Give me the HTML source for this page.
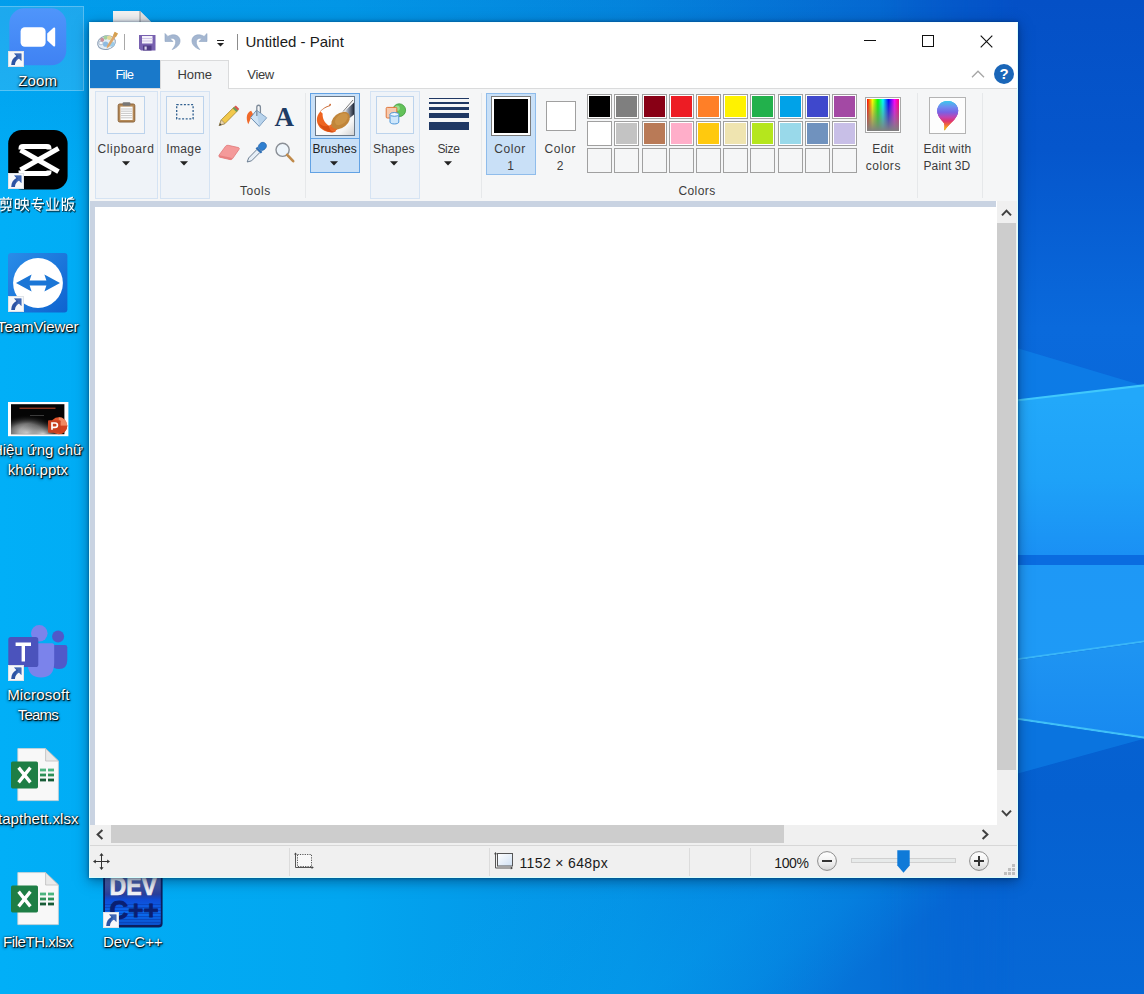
<!DOCTYPE html>
<html><head><meta charset="utf-8"><title>Untitled - Paint</title><style>
html,body{margin:0;padding:0;background:#0078d7;}
body{width:1144px;height:994px;overflow:hidden;position:relative;font-family:"Liberation Sans",sans-serif;}
.a{position:absolute;box-sizing:border-box}
.t{position:absolute;white-space:nowrap;line-height:20px;}
.d{position:absolute;white-space:nowrap;line-height:20px;color:#fff;text-shadow:1px 1px 1px rgba(0,0,0,.95),0 1px 3px rgba(0,0,0,.8),0 0 2px rgba(0,0,0,.6);}
svg{position:absolute;overflow:visible}
</style></head><body>
<svg class="a" style="left:0;top:0" width="1144" height="994" viewBox="0 0 1144 994">
<defs>
<linearGradient id="wg" x1="0" y1="0" x2="1144" y2="0" gradientUnits="userSpaceOnUse">
<stop offset="0" stop-color="#01aff7"/><stop offset="0.3" stop-color="#02a6f0"/><stop offset="0.55" stop-color="#0590e4"/><stop offset="0.75" stop-color="#0672d8"/><stop offset="0.9" stop-color="#0660d0"/><stop offset="1" stop-color="#0658cc"/>
</linearGradient>
<linearGradient id="wt" x1="0" y1="0" x2="0" y2="994" gradientUnits="userSpaceOnUse">
<stop offset="0" stop-color="#0040b0" stop-opacity="0.16"/><stop offset="0.2" stop-color="#0040b0" stop-opacity="0"/><stop offset="1" stop-color="#0040b0" stop-opacity="0"/>
</linearGradient>
<linearGradient id="rv" x1="0" y1="0" x2="0" y2="994" gradientUnits="userSpaceOnUse">
<stop offset="0" stop-color="#0450c6"/><stop offset="0.15" stop-color="#0556cc"/><stop offset="0.33" stop-color="#0a6adc"/><stop offset="0.8" stop-color="#0560d0"/><stop offset="1" stop-color="#0668d6"/>
</linearGradient>
<linearGradient id="rh" x1="880" y1="0" x2="1020" y2="0" gradientUnits="userSpaceOnUse">
<stop offset="0" stop-color="#fff" stop-opacity="0"/><stop offset="1" stop-color="#fff" stop-opacity="1"/>
</linearGradient>
<mask id="rm"><rect x="880" y="0" width="264" height="994" fill="url(#rh)"/></mask>
<linearGradient id="p1" x1="0" y1="400" x2="0" y2="556" gradientUnits="userSpaceOnUse">
<stop offset="0" stop-color="#22a8fa"/><stop offset="0.5" stop-color="#1ea2f8"/><stop offset="1" stop-color="#1a90f4"/>
</linearGradient>
<linearGradient id="p2" x1="0" y1="565" x2="0" y2="660" gradientUnits="userSpaceOnUse">
<stop offset="0" stop-color="#1e98f6"/><stop offset="1" stop-color="#1e9af6"/>
</linearGradient>
<linearGradient id="p3" x1="0" y1="650" x2="0" y2="735" gradientUnits="userSpaceOnUse">
<stop offset="0" stop-color="#1e94f2"/><stop offset="1" stop-color="#188af0"/>
</linearGradient>
<linearGradient id="bd" x1="500" y1="883" x2="692" y2="1114" gradientUnits="userSpaceOnUse">
<stop offset="0" stop-color="#00a8f4" stop-opacity="0"/><stop offset="0.6" stop-color="#00a8f4" stop-opacity=".3"/><stop offset="0.79" stop-color="#00a8f4" stop-opacity=".22"/><stop offset="1" stop-color="#00a8f4" stop-opacity="0"/>
</linearGradient>
</defs>
<rect width="1144" height="994" fill="url(#wg)"/>
<rect width="1144" height="994" fill="url(#wt)"/>
<rect x="880" width="264" height="994" fill="url(#rv)" mask="url(#rm)"/>
<rect x="0" y="860" width="1144" height="134" fill="url(#bd)"/>
<!-- right side light panes -->
<polygon points="900,313 1144,386 900,414" fill="#0e80e8" opacity="0.8"/>
<polygon points="900,414 1144,385 1144,556 900,556" fill="url(#p1)"/>
<polygon points="900,413.2 1144,384.2 1144,386.4 900,415.4" fill="#40c8fc"/>
<rect x="900" y="555" width="244" height="10" fill="#0a6ce0"/>
<polygon points="900,565 1144,565 1144,642 900,676" fill="url(#p2)"/>
<polygon points="900,675 1144,640.5 1144,642.5 900,677" fill="#3ab6f8"/>
<polygon points="900,677 1144,642.5 1144,737 900,701" fill="url(#p3)"/>
<polygon points="900,700.5 1144,736.5 1144,738.7 900,702.7" fill="#40c0f8"/>
<polygon points="900,702.7 1144,738.7 900,806" fill="#0c78e2" opacity="0.85"/>
</svg>
<svg style="left:112px;top:10px" width="40" height="13" viewBox="0 0 40 13"><path d="M1 13 V1 H28 L39 12 V13 Z" fill="#f2f2f2"/><path d="M28 1 V12 H39 Z" fill="#e2e2e2"/><path d="M28 1 V12" stroke="#7a7a7a" stroke-width="0.8"/></svg>
<div class="a" style="left:0px;top:6px;width:84px;height:85px;background:rgba(255,255,255,.115);border:1px solid rgba(255,255,255,.26);border-left:none"></div>
<svg style="left:9px;top:8px" width="58" height="58" viewBox="0 0 58 58"><defs><linearGradient id="zg" x1="0" y1="0" x2="0" y2="1"><stop offset="0" stop-color="#4f95fb"/><stop offset="1" stop-color="#3f82f3"/></linearGradient></defs>
<rect x="0.3" y="0.3" width="57" height="57" rx="15" fill="url(#zg)"/>
<rect x="11.6" y="19.2" width="25" height="19.6" rx="4.2" fill="#fff"/>
<path d="M38.2 25.4 L44.4 19.8 Q46.2 18.6 46.2 20.8 V37.2 Q46.2 39.4 44.4 38.2 L38.2 32.6 Z" fill="#fff"/></svg>
<svg style="left:8px;top:51px" width="16" height="16" viewBox="0 0 16 16"><rect width="16" height="16" fill="#f7f8fa"/><rect x="0.5" y="0.5" width="15" height="15" fill="none" stroke="#dfe3e8" stroke-width="1"/>
<path d="M13.4 2.6 V10 L11 7.6 C8.6 8.8 7.2 10.8 6.9 14 H3.2 C3.4 9.4 5.4 6.6 8.4 5.1 L6 2.6 Z" fill="#2d54a4"/>
<path d="M13.4 2.6 V10 L11 7.6 C9.6 8.3 8.6 9.2 7.9 10.4 C8 8 9 6.2 10.2 5.6 L8.6 4 L6 2.6 Z" fill="#5078c2" opacity=".55"/></svg>
<span class="d" style="left:18.20px;top:70.80px;font-size:15px;letter-spacing:0.189px;color:#fff;">Zoom</span>
<svg style="left:8px;top:130px" width="60" height="60" viewBox="0 0 60 60"><rect x="0.2" y="0" width="59.4" height="59.4" rx="13.5" fill="#000"/>
<g fill="none" stroke="#fff" stroke-width="5" stroke-linejoin="miter">
<path d="M41 19.5 V18.5 Q41 16.6 39 16.6 H15 Q13 16.6 13 18.5 V19.5"/>
<path d="M41 40.5 V41.5 Q41 43.4 39 43.4 H15 Q13 43.4 13 41.5 V40.5"/>
<path d="M12.5 20 L50.5 41.6"/><path d="M12.5 40 L50.5 18.4"/>
</g></svg>
<svg style="left:8px;top:173px" width="16" height="16" viewBox="0 0 16 16"><rect width="16" height="16" fill="#f7f8fa"/><rect x="0.5" y="0.5" width="15" height="15" fill="none" stroke="#dfe3e8" stroke-width="1"/>
<path d="M13.4 2.6 V10 L11 7.6 C8.6 8.8 7.2 10.8 6.9 14 H3.2 C3.4 9.4 5.4 6.6 8.4 5.1 L6 2.6 Z" fill="#2d54a4"/>
<path d="M13.4 2.6 V10 L11 7.6 C9.6 8.3 8.6 9.2 7.9 10.4 C8 8 9 6.2 10.2 5.6 L8.6 4 L6 2.6 Z" fill="#5078c2" opacity=".55"/></svg>
<svg style="left:-1.5px;top:196px" width="78" height="17" viewBox="0 0 78 17"><g fill="none" stroke="#000" stroke-opacity=".55" stroke-width="2.6" transform="translate(1 1)">
<path id="cjk" d="M1 3.2 H13 M4.4 1.2 L5.6 3 M9.8 1.2 L8.6 3 M2.2 5 V9.4 M2.2 5 H6 V9.2 M2.2 7 H6 M8.4 4.8 V8.6 M11.6 4.6 V9.6 L10.6 9.4 M1.2 11.2 H12.6 M6.6 11.2 Q6.2 14.4 1.4 15 M9.2 11.2 V14.6 L11.8 14.4
M16.4 3.4 V12.4 M16.4 3.4 H20.2 V12.4 H16.4 M16.4 7.8 H20.2 M22.2 4.4 H29 V9 H22.2 Z M25.6 1.6 V9.4 M21.2 9.2 H30 M25.6 9.2 Q24.8 13.6 21.4 15 M25.8 9.4 Q26.8 13.4 30 15
M34 3.6 H43 M32.2 7.6 H45 M38.6 1.2 L35.6 10.6 H42.6 M42.6 10.6 L39.2 14 M36.4 12 L41.6 15.2
M51.2 1.6 V13.6 M55.8 1.6 V13.6 M47.6 4.6 L49.6 10.8 M59.4 4.6 L57.4 10.8 M46.8 14 H60.2
M63.4 1.6 V15 M63.4 6 H66.6 M66.4 1.8 V6 M63.4 9.4 H66.2 V15 M68.6 3 H75.4 M68.6 3 V8.6 Q68.4 12.8 67.2 15 M68.8 7 H74.4 Q73.8 12 69.6 15 M70.4 8.6 Q72 12.8 75.6 15 M74 1.2 L69 2.8"/></g>
<use href="#cjk" fill="none" stroke="#fff" stroke-width="1.25"/></svg>
<svg style="left:8px;top:253px" width="60" height="60" viewBox="0 0 60 60"><defs><linearGradient id="tvg" x1="0" y1="0" x2="1" y2="1"><stop offset="0" stop-color="#2a8ce8"/><stop offset="1" stop-color="#0e63cf"/></linearGradient></defs>
<rect x="0" y="0" width="59.4" height="59.4" rx="3" fill="url(#tvg)"/>
<circle cx="30" cy="30" r="24.9" fill="#fff"/>
<path d="M8 30 L23.6 21.6 L21.6 27.4 H38.4 L36.4 21.6 L52 30 L36.4 38.4 L38.4 32.6 H21.6 L23.6 38.4 Z" fill="#1b76d6"/></svg>
<svg style="left:8px;top:296px" width="16" height="16" viewBox="0 0 16 16"><rect width="16" height="16" fill="#f7f8fa"/><rect x="0.5" y="0.5" width="15" height="15" fill="none" stroke="#dfe3e8" stroke-width="1"/>
<path d="M13.4 2.6 V10 L11 7.6 C8.6 8.8 7.2 10.8 6.9 14 H3.2 C3.4 9.4 5.4 6.6 8.4 5.1 L6 2.6 Z" fill="#2d54a4"/>
<path d="M13.4 2.6 V10 L11 7.6 C9.6 8.3 8.6 9.2 7.9 10.4 C8 8 9 6.2 10.2 5.6 L8.6 4 L6 2.6 Z" fill="#5078c2" opacity=".55"/></svg>
<span class="d" style="left:-3.00px;top:316.70px;font-size:15px;letter-spacing:-0.076px;color:#fff;">TeamViewer</span>
<svg style="left:8px;top:402px" width="61" height="35" viewBox="0 0 61 35"><defs><radialGradient id="smk" cx="0.3" cy="0.95" r="0.6"><stop offset="0" stop-color="#fff" stop-opacity=".95"/><stop offset="0.5" stop-color="#bbb" stop-opacity=".6"/><stop offset="1" stop-color="#000" stop-opacity="0"/></radialGradient>
<radialGradient id="smk2" cx="0.6" cy="1" r="0.45"><stop offset="0" stop-color="#eee" stop-opacity=".8"/><stop offset="1" stop-color="#000" stop-opacity="0"/></radialGradient></defs>
<rect width="60.4" height="34.2" fill="#fdfdfd"/>
<rect x="3" y="2.2" width="53.4" height="30" fill="#050505"/>
<rect x="3" y="2.2" width="53.4" height="30" fill="url(#smk)"/><rect x="3" y="2.2" width="53.4" height="30" fill="url(#smk2)"/>
<rect x="11.5" y="5.6" width="36" height="1.3" fill="#b4452c" opacity=".85"/>
<rect x="22" y="13" width="14" height="0.8" fill="#666" opacity=".7"/></svg>
<svg style="left:47px;top:416px" width="22" height="20" viewBox="0 0 22 20"><circle cx="11.8" cy="9.8" r="8.5" fill="#e2552d"/><path d="M11.8 1.3 A8.5 8.5 0 0 1 20.3 9.8 H11.8 Z" fill="#f08a62"/><path d="M11.8 9.8 H20.3 A8.5 8.5 0 0 1 11.8 18.3 Z" fill="#d2431f"/>
<rect x="1" y="4.2" width="12.6" height="12.6" rx="1" fill="#c9401f"/>
<path d="M5 13.8 V7 H8 Q10.4 7 10.4 9.2 Q10.4 11.4 8 11.4 H5" fill="none" stroke="#fff" stroke-width="1.7"/></svg>
<span class="d" style="left:-8.00px;top:439.60px;font-size:15px;letter-spacing:-0.066px;color:#fff;">Hiệu ứng chữ</span>
<span class="d" style="left:7.80px;top:459.70px;font-size:15px;letter-spacing:0.018px;color:#fff;">khói.pptx</span>
<svg style="left:8px;top:622px" width="62" height="60" viewBox="0 0 62 60"><circle cx="50.1" cy="14.6" r="6" fill="#5059c9"/>
<path d="M42.3 23 H57 Q59.3 23 59.3 25.3 V38 Q59.3 47 51 47 Q45 47 42.3 42 Z" fill="#5059c9"/>
<circle cx="31.3" cy="11.3" r="8.3" fill="#7b83eb"/>
<path d="M19.7 21.2 H44 Q46.2 21.2 46.2 23.4 V41 Q46.2 55.5 33 55.5 Q19.7 55.5 19.7 41 Z" fill="#7b83eb"/>
<rect x="0.3" y="15.1" width="30" height="30" rx="2.6" fill="#4b53bc"/>
<path d="M7.6 22.2 H23 M15.3 22.2 V39.4" stroke="#fff" stroke-width="3.4" fill="none"/></svg>
<svg style="left:8px;top:665px" width="16" height="16" viewBox="0 0 16 16"><rect width="16" height="16" fill="#f7f8fa"/><rect x="0.5" y="0.5" width="15" height="15" fill="none" stroke="#dfe3e8" stroke-width="1"/>
<path d="M13.4 2.6 V10 L11 7.6 C8.6 8.8 7.2 10.8 6.9 14 H3.2 C3.4 9.4 5.4 6.6 8.4 5.1 L6 2.6 Z" fill="#2d54a4"/>
<path d="M13.4 2.6 V10 L11 7.6 C9.6 8.3 8.6 9.2 7.9 10.4 C8 8 9 6.2 10.2 5.6 L8.6 4 L6 2.6 Z" fill="#5078c2" opacity=".55"/></svg>
<span class="d" style="left:7.20px;top:685.40px;font-size:15px;letter-spacing:0.173px;color:#fff;">Microsoft</span>
<span class="d" style="left:17.70px;top:705.30px;font-size:15px;letter-spacing:-0.776px;color:#fff;">Teams</span>
<svg style="left:11px;top:748px" width="49" height="54" viewBox="0 0 49 54"><path d="M6.8 0.6 H34.6 L47.4 13 V52.6 H6.8 Z" fill="#f8f8f8" stroke="#d0d0d0" stroke-width="0.8"/>
<path d="M34.6 0.6 V13 H47.4 Z" fill="#e9e9e9" stroke="#bdbdbd" stroke-width="0.8"/>
<rect x="29" y="20.6" width="6" height="2.8" fill="#4cb480"/><rect x="37" y="20.6" width="6" height="2.8" fill="#4cb480"/>
<rect x="29" y="25.6" width="6" height="2.8" fill="#2e9058"/><rect x="37" y="25.6" width="6" height="2.8" fill="#2e9058"/>
<rect x="29" y="30.6" width="6" height="2.8" fill="#185c37"/><rect x="37" y="30.6" width="6" height="2.8" fill="#185c37"/>
<rect x="0" y="13.6" width="27" height="26.8" rx="1.6" fill="#1e7e45"/>
<path d="M7.6 19.6 L19.4 34.4 M19.4 19.6 L7.6 34.4" stroke="#fff" stroke-width="3.3" fill="none"/></svg>
<span class="d" style="left:-2.00px;top:808.70px;font-size:15px;letter-spacing:0.035px;color:#fff;">tapthett.xlsx</span>
<svg style="left:11px;top:871.5px" width="49" height="54" viewBox="0 0 49 54"><path d="M6.8 0.6 H34.6 L47.4 13 V52.6 H6.8 Z" fill="#f8f8f8" stroke="#d0d0d0" stroke-width="0.8"/>
<path d="M34.6 0.6 V13 H47.4 Z" fill="#e9e9e9" stroke="#bdbdbd" stroke-width="0.8"/>
<rect x="29" y="20.6" width="6" height="2.8" fill="#4cb480"/><rect x="37" y="20.6" width="6" height="2.8" fill="#4cb480"/>
<rect x="29" y="25.6" width="6" height="2.8" fill="#2e9058"/><rect x="37" y="25.6" width="6" height="2.8" fill="#2e9058"/>
<rect x="29" y="30.6" width="6" height="2.8" fill="#185c37"/><rect x="37" y="30.6" width="6" height="2.8" fill="#185c37"/>
<rect x="0" y="13.6" width="27" height="26.8" rx="1.6" fill="#1e7e45"/>
<path d="M7.6 19.6 L19.4 34.4 M19.4 19.6 L7.6 34.4" stroke="#fff" stroke-width="3.3" fill="none"/></svg>
<span class="d" style="left:3.00px;top:932.00px;font-size:15px;letter-spacing:-0.424px;color:#fff;">FileTH.xlsx</span>
<svg style="left:103px;top:868px" width="60" height="60" viewBox="0 0 60 60"><defs><linearGradient id="dv1" x1="0" y1="0" x2="0" y2="1"><stop offset="0" stop-color="#6d7fb8"/><stop offset="0.45" stop-color="#2a3f9a"/><stop offset="0.55" stop-color="#0f4cd6"/><stop offset="0.8" stop-color="#0a6af0"/><stop offset="1" stop-color="#0a50cc"/></linearGradient></defs>
<rect x="0.2" y="0" width="59.4" height="59.6" rx="4" fill="#0c1d5c"/>
<rect x="2" y="1" width="55.8" height="56" rx="2.5" fill="url(#dv1)"/>
<g stroke="#0a3aa8" stroke-opacity=".55" stroke-width="1"><path d="M2 36.5 H58 M2 39.5 H58 M2 42.5 H58 M2 45.5 H58 M2 48.5 H58 M2 51.5 H58 M2 54.5 H58"/></g>
<text x="6.6" y="26.8" style="font-family:'Liberation Sans',sans-serif;font-weight:700;font-size:25px" fill="#f2f2f6" stroke="#f2f2f6" stroke-width="0.7" textLength="47.4" lengthAdjust="spacingAndGlyphs">DEV</text>
<text x="6.6" y="51" style="font-family:'Liberation Sans',sans-serif;font-weight:700;font-size:26px" fill="#0a1f72" stroke="#0a1f72" stroke-width="0.8" textLength="49" lengthAdjust="spacingAndGlyphs">C++</text></svg>
<svg style="left:103px;top:911.5px" width="16" height="16" viewBox="0 0 16 16"><rect width="16" height="16" fill="#f7f8fa"/><rect x="0.5" y="0.5" width="15" height="15" fill="none" stroke="#dfe3e8" stroke-width="1"/>
<path d="M13.4 2.6 V10 L11 7.6 C8.6 8.8 7.2 10.8 6.9 14 H3.2 C3.4 9.4 5.4 6.6 8.4 5.1 L6 2.6 Z" fill="#2d54a4"/>
<path d="M13.4 2.6 V10 L11 7.6 C9.6 8.3 8.6 9.2 7.9 10.4 C8 8 9 6.2 10.2 5.6 L8.6 4 L6 2.6 Z" fill="#5078c2" opacity=".55"/></svg>
<span class="d" style="left:103.00px;top:932.00px;font-size:15px;letter-spacing:-0.075px;color:#fff;">Dev-C++</span>
<div class="a" style="left:89px;top:22px;width:929px;height:856px;background:#fff;border:1px solid #d8ffff;border-top-color:#f4ffff;box-shadow:0 3px 12px rgba(0,25,60,.5),0 0 3px rgba(0,35,80,.55)"></div>
<svg style="left:96px;top:31px" width="23" height="20" viewBox="0 0 23 20"><defs><filter id="pbl" x="-10%" y="-10%" width="120%" height="120%"><feGaussianBlur stdDeviation="0.55"/></filter></defs>
<g filter="url(#pbl)">
<ellipse cx="10.5" cy="11.6" rx="9" ry="6.8" transform="rotate(-14 10.5 11.6)" fill="#e4eef6" stroke="#8d9fb5" stroke-width="1"/>
<ellipse cx="5" cy="12" rx="2.2" ry="1.8" fill="#f8fbfd" stroke="#8d9fb5" stroke-width="0.6"/>
<circle cx="6.2" cy="8.8" r="2" fill="#c8909a"/><circle cx="9.6" cy="6.6" r="2.1" fill="#a6d09c"/><circle cx="13.4" cy="6.8" r="2.3" fill="#e6d998"/>
<circle cx="9.6" cy="13.2" r="2.6" fill="#8fbbe2"/><ellipse cx="15.6" cy="13" rx="3" ry="2.6" fill="#9ccbe8"/>
<path d="M19.2 1.2 L21.6 2.8 L13.4 15.6 L10.6 17.6 L11.2 14.4 Z" fill="#dca66a"/>
<path d="M18.6 0.8 L22 2.6 L19.8 6.2 L17 4.6 Z" fill="#d6a050"/>
</g>
</svg>
<div class="a" style="left:124px;top:34px;width:1px;height:16px;background:#a8a8a8"></div>
<svg style="left:139px;top:35px" width="17" height="16" viewBox="0 0 17 16">
<path d="M0 0 H16.5 V15.5 H2 L0 13.5 Z" fill="#7861b0"/>
<rect x="3" y="1" width="10.5" height="7.5" fill="#f4f1fa"/>
<rect x="3" y="3" width="10.5" height="1" fill="#cfc6e6"/><rect x="3" y="5.5" width="10.5" height="1" fill="#cfc6e6"/>
<rect x="4" y="10.5" width="8.5" height="5" fill="#4d3a82"/><rect x="5.5" y="11.5" width="2.2" height="3.2" fill="#d9d2ee"/>
</svg>
<svg style="left:164px;top:32px" width="18" height="19" viewBox="0 0 18 19">
<path d="M1 1.5 L1 9.5 L9 9.5 L6.3 6.8 C8.2 5.8 11 6.4 11.6 9.3 C12.1 12 10.6 14.6 8.2 17.6 C13.2 15.6 16.6 12.2 16 7.8 C15.2 3 9.2 1.2 3.9 4.4 Z" fill="#a4b6d0" stroke="#8fa4c3" stroke-width="0.6"/>
</svg>
<svg style="left:190px;top:32px" width="18" height="19" viewBox="0 0 18 19">
<g transform="translate(18 0) scale(-1 1)"><path d="M1 1.5 L1 9.5 L9 9.5 L6.3 6.8 C8.2 5.8 11 6.4 11.6 9.3 C12.1 12 10.6 14.6 8.2 17.6 C13.2 15.6 16.6 12.2 16 7.8 C15.2 3 9.2 1.2 3.9 4.4 Z" fill="#a4b6d0" stroke="#8fa4c3" stroke-width="0.6"/></g>
</svg>
<div class="a" style="left:217px;top:40px;width:7px;height:1px;background:#222"></div>
<svg style="left:217px;top:43px" width="7" height="4" viewBox="0 0 7 4"><path d="M0 0 H7 L3.5 3.6 Z" fill="#222"/></svg>
<div class="a" style="left:237px;top:34px;width:1px;height:16px;background:#8c8c8c"></div>
<span class="t" style="left:245.50px;top:31.70px;font-size:15px;letter-spacing:-0.005px;color:#1a1a1a;">Untitled - Paint</span>
<div class="a" style="left:864px;top:40px;width:12px;height:1px;background:#111"></div>
<div class="a" style="left:922px;top:35px;width:12px;height:12px;border:1px solid #111"></div>
<svg style="left:980px;top:35px" width="13" height="13" viewBox="0 0 13 13"><path d="M0.7 0.7 L12.3 12.3 M12.3 0.7 L0.7 12.3" stroke="#111" stroke-width="1.15" fill="none"/></svg>
<svg style="left:971px;top:69px" width="14" height="10" viewBox="0 0 14 10"><path d="M1 8.2 L7 2.2 L13 8.2" stroke="#a6a6a6" stroke-width="1.3" fill="none"/></svg>
<div class="a" style="left:994px;top:64px;width:20px;height:20px;border-radius:10px;background:#1a66b8"></div>
<span class="t" style="left:994px;top:64px;width:20px;text-align:center;font-size:15px;font-weight:bold;color:#fff;line-height:20px">?</span>
<div class="a" style="left:90px;top:88px;width:927px;height:1px;background:#dadbdc"></div>
<div class="a" style="left:90px;top:60px;width:70px;height:28px;background:#1979ca"></div>
<span class="t" style="left:115.40px;top:64.90px;font-size:13px;letter-spacing:-0.762px;color:#fff;">File</span>
<div class="a" style="left:160px;top:60px;width:69px;height:29px;background:#f5f6f7;border:1px solid #dadbdc;border-bottom:none"></div>
<span class="t" style="left:177.50px;top:64.90px;font-size:13px;letter-spacing:-0.094px;color:#3b3b3b;">Home</span>
<span class="t" style="left:247.30px;top:64.90px;font-size:13px;letter-spacing:-0.336px;color:#3b3b3b;">View</span>
<div class="a" style="left:90px;top:89px;width:927px;height:112px;background:#f5f6f7"></div>
<div class="a" style="left:95px;top:91px;width:63px;height:108px;border:1px solid #d5e3f3;background:#eff3f8"></div>
<div class="a" style="left:107px;top:96px;width:38px;height:38px;border:1px solid #bcd3ec;background:#f5f6f7"></div>
<svg style="left:116px;top:101px" width="22" height="23" viewBox="0 0 22 23">
<rect x="2.2" y="3" width="16.6" height="18" rx="1.5" fill="#b58a58" stroke="#8a6238" stroke-width="1"/>
<rect x="4.4" y="5.6" width="12.2" height="13.4" fill="#fdfdfd"/>
<path d="M5 8H16M5 10.2H16M5 12.4H16M5 14.6H16M5 16.8H16" stroke="#b9b9b9" stroke-width="0.8"/>
<rect x="6.6" y="1.2" width="7.8" height="3.6" rx="1" fill="#777"/>
</svg>
<span class="t" style="left:97.50px;top:138.84px;font-size:12px;letter-spacing:0.626px;color:#3b3b3b;">Clipboard</span>
<svg style="left:122px;top:161px" width="8" height="5" viewBox="0 0 8 5"><path d="M0 0.3 H8 L4 4.6 Z" fill="#222"/></svg>
<div class="a" style="left:160px;top:91px;width:50px;height:108px;border:1px solid #d5e3f3;background:#eff3f8"></div>
<div class="a" style="left:166px;top:96px;width:38px;height:38px;border:1px solid #bcd3ec;background:#f5f6f7"></div>
<svg style="left:176px;top:104px" width="18" height="16" viewBox="0 0 18 16"><rect x="0.7" y="0.7" width="16.4" height="14.2" fill="none" stroke="#2f5f8f" stroke-width="1.3" stroke-dasharray="2 1.6"/></svg>
<span class="t" style="left:166.20px;top:138.84px;font-size:12px;letter-spacing:0.390px;color:#3b3b3b;">Image</span>
<svg style="left:180px;top:161px" width="8" height="5" viewBox="0 0 8 5"><path d="M0 0.3 H8 L4 4.6 Z" fill="#222"/></svg>
<svg style="left:217px;top:104px" width="24" height="24" viewBox="0 0 24 24">
<path d="M2.2 21.6 L4.3 15.8 L17.2 3 L20.8 6.6 L8 19.5 Z" fill="#f2c94c" stroke="#a58428" stroke-width="0.8"/>
<path d="M2.2 21.6 L4.3 15.8 L8 19.5 Z" fill="#e8d5b0" stroke="#8b7a55" stroke-width="0.6"/>
<path d="M2.2 21.6 L3.1 19.2 L4.7 20.8 Z" fill="#444"/>
<path d="M17.2 3 L18.8 1.5 L22.3 5 L20.8 6.6 Z" fill="#d9534f"/>
<path d="M15.8 4.4 L17.2 3 L20.8 6.6 L19.4 8 Z" fill="#6a9a5a"/>
</svg>
<svg style="left:245px;top:104px" width="24" height="24" viewBox="0 0 24 24">
<path d="M6.2 6.8 C1.6 8.4 0.6 14 3.2 20.2 C5.2 16.2 5.8 12.6 8.2 10.4 Z" fill="#f0692a"/>
<path d="M11.5 6.2 L21.6 13.8 L14.2 22.4 L5.6 13.6 Z" fill="#cfe3f5" stroke="#6c8fb3" stroke-width="1"/>
<path d="M11.5 6.2 L21.6 13.8 L14.2 22.4 Z" fill="#a9c8e6" opacity="0.6"/>
<path d="M11.8 12 V3.2 C11.8 0.6 15.4 0.6 15.4 3.2 V9" fill="none" stroke="#7d8a99" stroke-width="1.3"/>
</svg>
<span class="t" style="left:274.6px;top:102.6px;font-family:'Liberation Serif',serif;font-weight:bold;font-size:27px;line-height:28px;color:#1f3c64">A</span>
<svg style="left:217px;top:142px" width="24" height="21" viewBox="0 0 24 21">
<path d="M2 13.2 L8.6 4.2 Q9.6 3 11.2 3.3 L21.6 5.6 Q22.8 6 22 7.4 L15.6 16.6 Q14.6 18 13 17.6 L2.8 15.2 Q1.4 14.6 2 13.2 Z" fill="#f49a9a" stroke="#e07878" stroke-width="0.8"/>
<path d="M2 13.2 L13.2 15.6 L15.6 16.6 Q14.6 18 13 17.6 L2.8 15.2 Q1.4 14.6 2 13.2 Z" fill="#e98080"/>
</svg>
<svg style="left:245px;top:141px" width="24" height="23" viewBox="0 0 24 23">
<path d="M2.2 21 L3.6 17 L12 8.4 L15 11.4 L6.6 19.8 Z" fill="#e6eef6" stroke="#6d7f92" stroke-width="1"/>
<path d="M10.6 7.4 L15.8 12.6 L17.4 11 L12.2 5.8 Z" fill="#2f6fb5"/>
<path d="M13.2 6.2 C13.6 2.4 17.6 -0.2 20.4 2.4 C23 5 20.4 9 16.6 9.6 Z" fill="#2f7fd0" stroke="#1f5fa6" stroke-width="0.7"/>
</svg>
<svg style="left:274px;top:141px" width="22" height="23" viewBox="0 0 22 23">
<circle cx="8.6" cy="8.8" r="6.6" fill="#eef5fb" stroke="#8a8f96" stroke-width="1.4"/>
<path d="M13.2 13.8 L19.2 20.2" stroke="#c08a4a" stroke-width="2.6" stroke-linecap="round"/>
</svg>
<span class="t" style="left:240.00px;top:181.24px;font-size:12px;letter-spacing:0.537px;color:#3b3b3b;">Tools</span>
<div class="a" style="left:305px;top:93px;width:1px;height:105px;background:#e6e8ea"></div>
<div class="a" style="left:310px;top:93px;width:50px;height:80px;background:#c9e0f7;border:1px solid #62a2e4"></div>
<div class="a" style="left:311px;top:138px;width:48px;height:1px;background:#62a2e4"></div>
<div class="a" style="left:315px;top:96px;width:40px;height:40px;background:#f7f7f7;border:1px solid #6a7888"></div>
<svg style="left:316px;top:97px" width="38" height="38" viewBox="0 0 38 38"><defs><linearGradient id="bg1" x1="0.3" y1="0.3" x2="1" y2="1"><stop offset="0" stop-color="#ffffff"/><stop offset="0.7" stop-color="#f6f6f6"/><stop offset="1" stop-color="#d2d2d2"/></linearGradient>
<linearGradient id="fer" x1="28" y1="0" x2="38" y2="0" gradientUnits="userSpaceOnUse"><stop offset="0" stop-color="#f0f2f5"/><stop offset="0.45" stop-color="#8a93a3"/><stop offset="1" stop-color="#1e2636"/></linearGradient></defs>
<rect width="38" height="38" fill="url(#bg1)"/>
<path d="M14.6 6.8 C15.4 7.6 15 8.8 13.6 9.2 C9 10.6 4.6 13.6 4 15.6 C3.2 14.8 7 10.4 13 8.4 C13.8 8 13.8 7.4 13 7 Z" fill="#c8622a"/>
<path d="M4.4 14.4 C-0.6 19.4 -0.6 27.4 6.4 32.6 C10.4 35.4 15.4 36 19.4 34.4 L12.8 28.8 C8.6 26 6.4 22 6.6 16.6 Z" fill="#ee6420"/>
<path d="M2 25 C4 31 10 35 16 35.4 C18 35.4 19.4 34.4 19.4 34.4 L12.8 28.8 C8 30.2 4 28 2 25 Z" fill="#d94f12"/>
<path d="M12.8 28.8 L17.6 26 L21 31.4 L19.4 34.4 C17.4 35.6 13.6 33.6 12.8 28.8 Z" fill="#f07030"/>
<path d="M27 14.6 L37 3" stroke="#5a5a5a" stroke-width="0.8" fill="none"/>
<path d="M27.6 15 L38 5.6 V17.6 L33.4 21.2 Z" fill="url(#fer)"/>
<ellipse cx="24.6" cy="23.6" rx="10.6" ry="7.2" transform="rotate(-40 24.6 23.6)" fill="#c0853a"/>
<ellipse cx="25.4" cy="22.2" rx="7.4" ry="4.6" transform="rotate(-40 25.4 22.2)" fill="#d09a4c" opacity=".75"/>
<path d="M15 29.6 C17.6 31.6 19.6 32.4 21.6 32 C19.8 34 16 34.2 13.6 31.2 Z" fill="#e66a26"/></svg>
<span class="t" style="left:312.40px;top:138.84px;font-size:12px;letter-spacing:0.040px;color:#222;">Brushes</span>
<svg style="left:330px;top:161px" width="8" height="5" viewBox="0 0 8 5"><path d="M0 0.3 H8 L4 4.6 Z" fill="#222"/></svg>
<div class="a" style="left:370px;top:91px;width:50px;height:108px;border:1px solid #d5e3f3;background:#eff3f8"></div>
<div class="a" style="left:376px;top:96px;width:38px;height:38px;border:1px solid #bcd3ec;background:#f5f6f7"></div>
<svg style="left:385px;top:102px" width="22" height="24" viewBox="0 0 22 24">
<circle cx="14.2" cy="8.2" r="6.4" fill="#63c25a" stroke="#3f9a3c" stroke-width="0.8"/>
<circle cx="12.2" cy="6.2" r="2.6" fill="#a6e39c" opacity="0.8"/>
<rect x="1.2" y="5.4" width="10.6" height="10.6" rx="1" fill="#f6c9ae" stroke="#e0763a" stroke-width="1"/>
<path d="M5 12.4 V20 C5 22.6 13.8 22.6 13.8 20 V12.4 Z" fill="#cfe7fb" stroke="#3f8fd6" stroke-width="0.9"/>
<ellipse cx="9.4" cy="12.4" rx="4.4" ry="1.9" fill="#eef7ff" stroke="#3f8fd6" stroke-width="0.9"/>
</svg>
<span class="t" style="left:373.00px;top:138.84px;font-size:12px;letter-spacing:0.167px;color:#3b3b3b;">Shapes</span>
<svg style="left:390px;top:161px" width="8" height="5" viewBox="0 0 8 5"><path d="M0 0.3 H8 L4 4.6 Z" fill="#222"/></svg>
<div class="a" style="left:429px;top:98px;width:40px;height:1px;background:#1f3864"></div>
<div class="a" style="left:429px;top:102px;width:40px;height:2px;background:#1f3864"></div>
<div class="a" style="left:429px;top:107px;width:40px;height:3px;background:#1f3864"></div>
<div class="a" style="left:429px;top:113px;width:40px;height:5px;background:#1f3864"></div>
<div class="a" style="left:429px;top:122px;width:40px;height:8px;background:#1f3864"></div>
<span class="t" style="left:437.40px;top:138.84px;font-size:12px;letter-spacing:-0.311px;color:#3b3b3b;">Size</span>
<svg style="left:444px;top:161px" width="8" height="5" viewBox="0 0 8 5"><path d="M0 0.3 H8 L4 4.6 Z" fill="#222"/></svg>
<div class="a" style="left:481px;top:93px;width:1px;height:105px;background:#e6e8ea"></div>
<div class="a" style="left:486px;top:93px;width:50px;height:82px;background:#c9e0f7;border:1px solid #8fbceb"></div>
<div class="a" style="left:491px;top:96px;width:40px;height:40px;background:#fff;border:1px solid #7a7a7a;"></div>
<div class="a" style="left:494px;top:99px;width:34px;height:34px;background:#000"></div>
<span class="t" style="left:494.30px;top:138.84px;font-size:12px;letter-spacing:0.585px;color:#3b3b3b;">Color</span>
<span class="t" style="left:507.30px;top:155.74px;font-size:12px;letter-spacing:-0.474px;color:#3b3b3b;">1</span>
<div class="a" style="left:546px;top:101px;width:30px;height:30px;background:#fff;border:1px solid #a0a0a0"></div>
<span class="t" style="left:544.60px;top:138.84px;font-size:12px;letter-spacing:0.585px;color:#3b3b3b;">Color</span>
<span class="t" style="left:556.80px;top:155.74px;font-size:12px;letter-spacing:-0.274px;color:#3b3b3b;">2</span>
<div class="a" style="left:587px;top:94px;width:25px;height:25px;border:1px solid #a0a0a0;background:#fff"></div>
<div class="a" style="left:589px;top:96px;width:21px;height:21px;background:#000000"></div>
<div class="a" style="left:587px;top:121px;width:25px;height:25px;border:1px solid #a0a0a0;background:#fff"></div>
<div class="a" style="left:589px;top:123px;width:21px;height:21px;background:#ffffff"></div>
<div class="a" style="left:587px;top:148px;width:25px;height:25px;border:1px solid #a0a0a0;background:#f5f6f7"></div>
<div class="a" style="left:614px;top:94px;width:25px;height:25px;border:1px solid #a0a0a0;background:#fff"></div>
<div class="a" style="left:616px;top:96px;width:21px;height:21px;background:#7f7f7f"></div>
<div class="a" style="left:614px;top:121px;width:25px;height:25px;border:1px solid #a0a0a0;background:#fff"></div>
<div class="a" style="left:616px;top:123px;width:21px;height:21px;background:#c3c3c3"></div>
<div class="a" style="left:614px;top:148px;width:25px;height:25px;border:1px solid #a0a0a0;background:#f5f6f7"></div>
<div class="a" style="left:642px;top:94px;width:25px;height:25px;border:1px solid #a0a0a0;background:#fff"></div>
<div class="a" style="left:644px;top:96px;width:21px;height:21px;background:#880015"></div>
<div class="a" style="left:642px;top:121px;width:25px;height:25px;border:1px solid #a0a0a0;background:#fff"></div>
<div class="a" style="left:644px;top:123px;width:21px;height:21px;background:#b97a57"></div>
<div class="a" style="left:642px;top:148px;width:25px;height:25px;border:1px solid #a0a0a0;background:#f5f6f7"></div>
<div class="a" style="left:669px;top:94px;width:25px;height:25px;border:1px solid #a0a0a0;background:#fff"></div>
<div class="a" style="left:671px;top:96px;width:21px;height:21px;background:#ed1c24"></div>
<div class="a" style="left:669px;top:121px;width:25px;height:25px;border:1px solid #a0a0a0;background:#fff"></div>
<div class="a" style="left:671px;top:123px;width:21px;height:21px;background:#ffaec9"></div>
<div class="a" style="left:669px;top:148px;width:25px;height:25px;border:1px solid #a0a0a0;background:#f5f6f7"></div>
<div class="a" style="left:696px;top:94px;width:25px;height:25px;border:1px solid #a0a0a0;background:#fff"></div>
<div class="a" style="left:698px;top:96px;width:21px;height:21px;background:#ff7f27"></div>
<div class="a" style="left:696px;top:121px;width:25px;height:25px;border:1px solid #a0a0a0;background:#fff"></div>
<div class="a" style="left:698px;top:123px;width:21px;height:21px;background:#ffc90e"></div>
<div class="a" style="left:696px;top:148px;width:25px;height:25px;border:1px solid #a0a0a0;background:#f5f6f7"></div>
<div class="a" style="left:723px;top:94px;width:25px;height:25px;border:1px solid #a0a0a0;background:#fff"></div>
<div class="a" style="left:725px;top:96px;width:21px;height:21px;background:#fff200"></div>
<div class="a" style="left:723px;top:121px;width:25px;height:25px;border:1px solid #a0a0a0;background:#fff"></div>
<div class="a" style="left:725px;top:123px;width:21px;height:21px;background:#efe4b0"></div>
<div class="a" style="left:723px;top:148px;width:25px;height:25px;border:1px solid #a0a0a0;background:#f5f6f7"></div>
<div class="a" style="left:750px;top:94px;width:25px;height:25px;border:1px solid #a0a0a0;background:#fff"></div>
<div class="a" style="left:752px;top:96px;width:21px;height:21px;background:#22b14c"></div>
<div class="a" style="left:750px;top:121px;width:25px;height:25px;border:1px solid #a0a0a0;background:#fff"></div>
<div class="a" style="left:752px;top:123px;width:21px;height:21px;background:#b5e61d"></div>
<div class="a" style="left:750px;top:148px;width:25px;height:25px;border:1px solid #a0a0a0;background:#f5f6f7"></div>
<div class="a" style="left:778px;top:94px;width:25px;height:25px;border:1px solid #a0a0a0;background:#fff"></div>
<div class="a" style="left:780px;top:96px;width:21px;height:21px;background:#00a2e8"></div>
<div class="a" style="left:778px;top:121px;width:25px;height:25px;border:1px solid #a0a0a0;background:#fff"></div>
<div class="a" style="left:780px;top:123px;width:21px;height:21px;background:#99d9ea"></div>
<div class="a" style="left:778px;top:148px;width:25px;height:25px;border:1px solid #a0a0a0;background:#f5f6f7"></div>
<div class="a" style="left:805px;top:94px;width:25px;height:25px;border:1px solid #a0a0a0;background:#fff"></div>
<div class="a" style="left:807px;top:96px;width:21px;height:21px;background:#3f48cc"></div>
<div class="a" style="left:805px;top:121px;width:25px;height:25px;border:1px solid #a0a0a0;background:#fff"></div>
<div class="a" style="left:807px;top:123px;width:21px;height:21px;background:#7092be"></div>
<div class="a" style="left:805px;top:148px;width:25px;height:25px;border:1px solid #a0a0a0;background:#f5f6f7"></div>
<div class="a" style="left:832px;top:94px;width:25px;height:25px;border:1px solid #a0a0a0;background:#fff"></div>
<div class="a" style="left:834px;top:96px;width:21px;height:21px;background:#a349a4"></div>
<div class="a" style="left:832px;top:121px;width:25px;height:25px;border:1px solid #a0a0a0;background:#fff"></div>
<div class="a" style="left:834px;top:123px;width:21px;height:21px;background:#c8bfe7"></div>
<div class="a" style="left:832px;top:148px;width:25px;height:25px;border:1px solid #a0a0a0;background:#f5f6f7"></div>
<span class="t" style="left:678.40px;top:180.84px;font-size:12px;letter-spacing:0.421px;color:#3b3b3b;">Colors</span>
<div class="a" style="left:865px;top:97px;width:36px;height:36px;background:#fff;border:1px solid #a9a9a9"></div>
<svg style="left:867px;top:99px" width="32" height="32" viewBox="0 0 32 32"><defs><linearGradient id="rb" x1="0" y1="0" x2="1" y2="0">
<stop offset="0" stop-color="#ff0000"/><stop offset="0.17" stop-color="#ffff00"/><stop offset="0.34" stop-color="#00ff00"/><stop offset="0.5" stop-color="#00ffff"/><stop offset="0.67" stop-color="#0000ff"/><stop offset="0.86" stop-color="#ff00ff"/><stop offset="1" stop-color="#ff0070"/></linearGradient>
<linearGradient id="rg" x1="0" y1="0" x2="0" y2="1"><stop offset="0" stop-color="#808080" stop-opacity="0"/><stop offset="1" stop-color="#808080" stop-opacity="1"/></linearGradient></defs>
<rect width="32" height="32" fill="url(#rb)"/><rect width="32" height="32" fill="url(#rg)"/></svg>
<span class="t" style="left:872.30px;top:138.84px;font-size:12px;letter-spacing:0.231px;color:#3b3b3b;">Edit</span>
<span class="t" style="left:865.80px;top:155.74px;font-size:12px;letter-spacing:0.515px;color:#3b3b3b;">colors</span>
<div class="a" style="left:917px;top:93px;width:1px;height:105px;background:#e6e8ea"></div>
<div class="a" style="left:929px;top:97px;width:37px;height:37px;background:#fdfdfd;border:1px solid #b4b4b4"></div>
<svg style="left:929px;top:97px" width="37" height="37" viewBox="0 0 37 37"><defs><linearGradient id="p3d" x1="0" y1="3.9" x2="0" y2="33.6" gradientUnits="userSpaceOnUse">
<stop offset="0" stop-color="#3bc8ec"/><stop offset="0.2" stop-color="#6f8df0"/><stop offset="0.38" stop-color="#7862e4"/><stop offset="0.55" stop-color="#c244b0"/><stop offset="0.68" stop-color="#e0356e"/><stop offset="0.8" stop-color="#ee6a3a"/><stop offset="0.92" stop-color="#f5b020"/><stop offset="1" stop-color="#c8a020"/></linearGradient>
<radialGradient id="p3c" cx="23.5" cy="6.5" r="9" gradientUnits="userSpaceOnUse"><stop offset="0" stop-color="#2fe0f0" stop-opacity=".95"/><stop offset="1" stop-color="#2fd0f0" stop-opacity="0"/></radialGradient>
<radialGradient id="p3l" cx="10" cy="13" r="6" gradientUnits="userSpaceOnUse"><stop offset="0" stop-color="#c89cf8" stop-opacity=".8"/><stop offset="1" stop-color="#c89cf8" stop-opacity="0"/></radialGradient></defs>
<path id="drop" d="M15.4 33.6 C15.2 31 16.2 28.5 15 26.2 C13.5 23.5 8.3 20 8.3 13.8 C8.3 8 12.8 3.9 18.6 3.9 C24.6 3.9 29.2 8.2 29.2 13.6 C29.2 20.5 22 25.8 18.6 29.6 C17.2 31.2 16.2 32.6 15.4 33.6 Z" fill="url(#p3d)"/>
<use href="#drop" fill="url(#p3c)"/><use href="#drop" fill="url(#p3l)"/></svg>
<span class="t" style="left:923.50px;top:138.84px;font-size:12px;letter-spacing:0.294px;color:#3b3b3b;">Edit with</span>
<span class="t" style="left:923.50px;top:155.74px;font-size:12px;letter-spacing:0.109px;color:#3b3b3b;">Paint 3D</span>
<div class="a" style="left:982px;top:93px;width:1px;height:105px;background:#e6e8ea"></div>
<div class="a" style="left:90px;top:201px;width:906px;height:624px;background:#c9d3e2"></div>
<div class="a" style="left:95px;top:207px;width:902px;height:618px;background:#fff"></div>
<div class="a" style="left:997px;top:201px;width:20px;height:624px;background:#f0f0f0"></div>
<div class="a" style="left:997px;top:223px;width:19px;height:547px;background:#cdcdcd"></div>
<svg style="left:1001px;top:208px" width="11" height="9" viewBox="0 0 11 9"><path d="M1 7.4 L5.5 2.6 L10 7.4" stroke="#404040" stroke-width="2" fill="none"/></svg>
<svg style="left:1001px;top:809px" width="11" height="9" viewBox="0 0 11 9"><path d="M1 1.6 L5.5 6.4 L10 1.6" stroke="#404040" stroke-width="2" fill="none"/></svg>
<div class="a" style="left:90px;top:825px;width:927px;height:20px;background:#f0f0f0"></div>
<div class="a" style="left:111px;top:825px;width:673px;height:18px;background:#cdcdcd"></div>
<svg style="left:95px;top:829px" width="9" height="11" viewBox="0 0 9 11"><path d="M7.4 1 L2.6 5.5 L7.4 10" stroke="#404040" stroke-width="2" fill="none"/></svg>
<svg style="left:981px;top:829px" width="9" height="11" viewBox="0 0 9 11"><path d="M1.6 1 L6.4 5.5 L1.6 10" stroke="#404040" stroke-width="2" fill="none"/></svg>
<div class="a" style="left:90px;top:845px;width:927px;height:32px;background:#f0f0f0;border-top:1px solid #d7d7d7"></div>
<div class="a" style="left:289px;top:848px;width:1px;height:28px;background:#dcdcdc"></div>
<div class="a" style="left:489px;top:848px;width:1px;height:28px;background:#dcdcdc"></div>
<div class="a" style="left:689px;top:848px;width:1px;height:28px;background:#dcdcdc"></div>
<div class="a" style="left:750px;top:848px;width:1px;height:28px;background:#dcdcdc"></div>
<svg style="left:93px;top:853px" width="17" height="17" viewBox="0 0 17 17"><path d="M8.5 1.5 V15.5 M1.5 8.5 H15.5" stroke="#333" stroke-width="1" fill="none"/>
<path d="M8.5 0 L10.6 2.8 H6.4 Z M8.5 17 L10.6 14.2 H6.4 Z M0 8.5 L2.8 6.4 V10.6 Z M17 8.5 L14.2 6.4 V10.6 Z" fill="#333"/></svg>
<svg style="left:294px;top:852px" width="20" height="18" viewBox="0 0 20 18"><rect x="3.5" y="2.5" width="14" height="12" fill="#f8f8f8" stroke="#555" stroke-width="1" stroke-dasharray="1.2 1.2"/>
<path d="M1.5 2 V15.5 H18.5" stroke="#555" stroke-width="1" fill="none"/>
<path d="M1.5 0.5 L3 2.6 H0 Z M19.8 15.5 L17.6 14 V17 Z" fill="#444"/></svg>
<svg style="left:494px;top:852px" width="20" height="18" viewBox="0 0 20 18"><defs><linearGradient id="isz" x1="0" y1="0" x2="1" y2="1"><stop offset="0" stop-color="#ffffff"/><stop offset="1" stop-color="#cfe0f3"/></linearGradient></defs>
<rect x="3.5" y="1.5" width="15" height="12.5" fill="url(#isz)" stroke="#555" stroke-width="1"/>
<path d="M1.5 1.5 V16 H17.5" stroke="#555" stroke-width="1" fill="none"/>
<path d="M1.5 0 L3 2.2 H0 Z M19 16 L16.8 14.5 V17.5 Z" fill="#444"/></svg>
<span class="t" style="left:519.50px;top:853.15px;font-size:14px;letter-spacing:0.358px;color:#1a1a1a;">1152 × 648px</span>
<span class="t" style="left:774.30px;top:852.75px;font-size:14px;letter-spacing:-0.402px;color:#1a1a1a;">100%</span>
<svg style="left:816px;top:850px" width="22" height="22" viewBox="0 0 22 22"><defs><linearGradient id="zb827" x1="0" y1="0" x2="0" y2="1"><stop offset="0" stop-color="#ffffff"/><stop offset="0.55" stop-color="#f1f1f1"/><stop offset="1" stop-color="#d6d6d6"/></linearGradient></defs>
<circle cx="11" cy="11" r="9.4" fill="url(#zb827)" stroke="#808080" stroke-width="0.9"/>
<path d="M6 11 H16 " stroke="#333" stroke-width="2" fill="none"/></svg>
<svg style="left:968px;top:850px" width="22" height="22" viewBox="0 0 22 22"><defs><linearGradient id="zb979" x1="0" y1="0" x2="0" y2="1"><stop offset="0" stop-color="#ffffff"/><stop offset="0.55" stop-color="#f1f1f1"/><stop offset="1" stop-color="#d6d6d6"/></linearGradient></defs>
<circle cx="11" cy="11" r="9.4" fill="url(#zb979)" stroke="#808080" stroke-width="0.9"/>
<path d="M6 11 H16 M11 6 V16" stroke="#333" stroke-width="2" fill="none"/></svg>
<div class="a" style="left:851px;top:858px;width:105px;height:5px;background:#e7eaea;border:1px solid #d0d0d0"></div>
<svg style="left:897px;top:850px" width="13" height="24" viewBox="0 0 13 24"><path d="M0.3 0.3 H12.7 V15.6 L6.5 22.8 L0.3 15.6 Z" fill="#0f7ad8"/></svg>
<div class="a" style="left:1012px;top:864px;width:3px;height:3px;background:#bfbfbf"></div>
<div class="a" style="left:1008px;top:868px;width:3px;height:3px;background:#bfbfbf"></div>
<div class="a" style="left:1012px;top:868px;width:3px;height:3px;background:#bfbfbf"></div>
<div class="a" style="left:1004px;top:872px;width:3px;height:3px;background:#bfbfbf"></div>
<div class="a" style="left:1008px;top:872px;width:3px;height:3px;background:#bfbfbf"></div>
<div class="a" style="left:1012px;top:872px;width:3px;height:3px;background:#bfbfbf"></div>
</body></html>
